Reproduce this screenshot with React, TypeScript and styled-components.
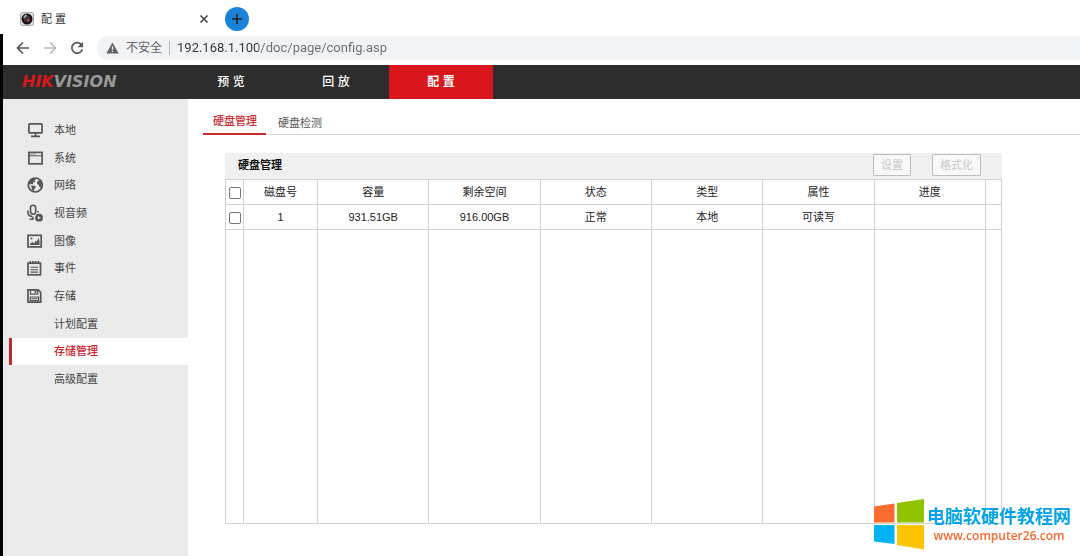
import React from "react";
import styled, { createGlobalStyle } from "styled-components";

const GlobalStyle = createGlobalStyle`
  * { box-sizing: border-box; }
  body {
    margin: 0;
    background: #fff;
    color: #222;
    font-family: "Liberation Sans", "Noto Sans CJK SC", sans-serif;
    font-size: 11px;
    line-height: 16px;
  }
  a { color: inherit; text-decoration: none; }
  button { font: inherit; padding: 0; border: 0; background: none; color: inherit; }
`;

const Page = styled.div`
  min-height: 100vh;
  display: flex;
  flex-direction: column;
`;

const TabStrip = styled.div`
  height: 34px;
  padding: 3px 20px 0;
  display: flex;
  align-items: center;
`;

const BrowserTab = styled.div`
  width: 190px;
  display: flex;
  align-items: center;
  gap: 7px;
  color: #333;
  span { flex: 1; }
`;

const IconButton = styled.button`
  display: flex;
  align-items: center;
  justify-content: center;
  flex: none;
`;

const NewTab = styled(IconButton)`
  width: 24px;
  height: 24px;
  margin-left: 15px;
  border-radius: 50%;
  background: #1a82d8;
`;

const Window = styled.div`
  flex: 1;
  display: flex;
  flex-direction: column;
  border-left: 3px solid #000;
`;

const Toolbar = styled.div`
  height: 31px;
  padding: 2px 0 5px 13px;
  display: flex;
  align-items: center;
  gap: 13px;
`;

const Address = styled.label`
  flex: 1;
  height: 24px;
  padding-left: 9px;
  display: flex;
  align-items: center;
  gap: 7px;
  border-radius: 12px 0 0 12px;
  background: #f1f3f4;
  color: #5f6368;
  font-size: 12px;
`;

const Divider = styled.i`
  width: 1px;
  height: 14px;
  background: #b4b7ba;
`;

const AddressInput = styled.input`
  flex: 1;
  height: 22px;
  padding: 0;
  border: 0;
  outline: 0;
  font: 13px/22px Roboto, "Noto Sans CJK SC", sans-serif;
  color: transparent;
  caret-color: #333;
  background: linear-gradient(to right, #303336 81px, #6a6d71 81px) text;
`;

const Header = styled.header`
  height: 34px;
  display: flex;
  background: #2d2d2d;
  color: #fff;
`;

const Logo = styled.a`
  width: 176px;
  padding-left: 19px;
  font: italic 700 16px/34px "DejaVu Sans", sans-serif;
  color: #999;
  b { color: #d9161c; }
`;

const Nav = styled.nav`
  display: flex;
  gap: 1px;
`;

const NavLink = styled.a<{ $active?: boolean }>`
  width: 104px;
  text-align: center;
  font-size: 12px;
  line-height: 34px;
  font-weight: ${(p) => (p.$active ? 700 : 500)};
  background: ${(p) => (p.$active ? "#d9161c" : "transparent")};
`;

const Body = styled.div`
  flex: 1;
  display: flex;
`;

const Sidebar = styled.aside`
  width: 185px;
  flex: none;
  padding-top: 17px;
  background: #eaeaea;
`;

const Menu = styled.ul`
  list-style: none;
  margin: 0;
  padding: 0;
  height: 277px;
  display: grid;
  grid-auto-rows: 1fr;
`;

const MenuLink = styled.a<{ $active?: boolean }>`
  height: 100%;
  margin-left: 6px;
  padding-left: 15px;
  border-left: 3px solid ${(p) => (p.$active ? "#c9252d" : "transparent")};
  background: ${(p) => (p.$active ? "#fff" : "transparent")};
  color: ${(p) => (p.$active ? "#d0222b" : "#444")};
  font-weight: ${(p) => (p.$active ? 500 : 400)};
  display: flex;
  align-items: center;
  gap: 11px;
`;

const IconSlot = styled.span`
  width: 16px;
  display: flex;
  color: #555;
`;

const Main = styled.main`
  flex: 1;
  min-width: 0;
  padding: 10px 0 32px 15px;
`;

const Tabs = styled.nav`
  height: 26px;
  display: flex;
  align-items: stretch;
  border-bottom: 1px solid #d4d4d4;
`;

const TabLink = styled.a<{ $active?: boolean }>`
  height: 26px;
  padding: ${(p) => (p.$active ? "4px 9px 0 10px" : "6px 12px 0")};
  border-bottom: 2px solid ${(p) => (p.$active ? "#cc2a33" : "transparent")};
  color: ${(p) => (p.$active ? "#cc2a33" : "#555")};
  font-weight: ${(p) => (p.$active ? 500 : 400)};
`;

const Panel = styled.section`
  margin: 18px 78px 0 22px;
`;

const PanelHead = styled.div`
  height: 26px;
  padding: 0 21px 2px 13px;
  display: flex;
  align-items: center;
  gap: 21px;
  background: #f0f0f0;
  h2 {
    flex: 1;
    margin: 0;
    font-size: 11px;
    font-weight: 700;
    color: #111;
  }
`;

const DisabledButton = styled.button`
  height: 22px;
  padding: 0 7px;
  border: 1px solid #bdbdbd;
  border-radius: 1px;
  background: #f8f8f8;
  color: #c8c8c8;
`;

const Grid = styled.table`
  width: 100%;
  table-layout: fixed;
  border-collapse: collapse;
  th, td {
    height: 25px;
    padding: 0;
    border: 1px solid #d2d2d2;
    font-weight: 400;
    text-align: center;
  }
`;

const Filler = styled.tr`
  && td { height: 294px; }
`;

const Check = styled.input`
  appearance: none;
  display: block;
  width: 12px;
  height: 12px;
  margin: 2px auto 0;
  border: 1px solid #767676;
  border-radius: 2px;
  background: #fff;
`;

const Watermark = styled.a`
  position: fixed;
  right: 9px;
  bottom: 6px;
  display: flex;
  align-items: center;
  gap: 3px;
`;

const WatermarkText = styled.span`
  display: flex;
  flex-direction: column;
  align-items: center;
  gap: 2px;
  strong { font: 700 18px/20px "Noto Sans CJK SC", sans-serif; color: #00a2ec; }
  em { font: 600 12px/18px "Open Sans", sans-serif; color: #f8672c; }
`;

const Svg = ({ children }: { children: React.ReactNode }) => (
  <svg width="16" height="16" viewBox="0 0 16 16" fill="none" stroke="currentColor" strokeWidth="1.7" aria-hidden="true">
    {children}
  </svg>
);

const icons = {
  local: (
    <Svg>
      <rect x="1.9" y="1.9" width="13.200" height="9" rx="1" />
      <path d="M8.500 11v3M4 14.300h9" />
    </Svg>
  ),
  system: (
    <Svg>
      <rect x="1.900" y="2.400" width="13.200" height="11.400" />
      <path d="M2 5.800h13" strokeWidth="1" />
      <path d="M3.500 4.200h1M5.500 4.200h1M7.500 4.200h1" strokeWidth="1" />
    </Svg>
  ),
  network: (
    <Svg>
      <circle cx="8.300" cy="8" r="7" />
      <path
        d="M1.500 7.500C2 4 4.500 1.500 8 1.300L9 2.500 7.500 3.500 8 4.800 6.200 5.500 6 7.200 4.500 7zM3.500 8.500l4.500.3.8 1.500-1.500 1.700-.3 2.300L5 12.500 4.800 10.500zM10.500 4l2.500-.8 1.800 3.300-.3 4-1.700-.3L11.700 8 10 6.800z"
        fill="currentColor"
        stroke="none"
      />
    </Svg>
  ),
  av: (
    <svg width="16" height="18" viewBox="0 0 16 18" fill="none" stroke="currentColor" strokeWidth="1.6" aria-hidden="true">
      <rect x="3.500" y="1.200" width="5.200" height="9" rx="2.600" />
      <path d="M1 6.500v2c0 2.300 1.800 3.700 4 3.900M5.700 12.500v2.800M2.500 15.300h4.200M11 7v1.600" />
      <circle cx="12" cy="13.700" r="3.900" fill="currentColor" stroke="none" />
      <path d="M10.900 11.900l2.900 1.800-2.900 1.800z" fill="#eaeaea" stroke="none" />
    </svg>
  ),
  image: (
    <Svg>
      <rect x="1" y="2.300" width="13.200" height="11.600" />
      <path d="M3.200 12V10.500l2.500-1.500 1.800 1.500 1-3 1 1.500 2.200-4L12.500 8v4z" fill="currentColor" stroke="none" />
      <circle cx="4.500" cy="5.500" r="1" fill="currentColor" stroke="none" />
    </Svg>
  ),
  event: (
    <Svg>
      <rect x="1" y="3.200" width="12.500" height="11.600" />
      <path d="M3.200 1v3M5.900 1v3M8.600 1v3M11.300 1v3" />
      <path d="M3.500 7.300H11M3.500 9.700H11M3.500 12.100H11" strokeWidth="1.100" />
    </Svg>
  ),
  storage: (
    <Svg>
      <path d="M1 1.900h10.300l2.400 2.400v9.900H1z" />
      <path d="M3.500 2v4.200h7.200V2" strokeWidth="1.200" />
      <path d="M8.500 2.500v2.500" />
      <path d="M3.300 9h8.300v3.500H3.300z" strokeWidth="1.200" />
      <path d="M4.500 10.700h6" strokeWidth="1" />
    </Svg>
  ),
};

const menu: { label: string; icon?: keyof typeof icons; active?: boolean }[] = [
  { label: "本地", icon: "local" },
  { label: "系统", icon: "system" },
  { label: "网络", icon: "network" },
  { label: "视音频", icon: "av" },
  { label: "图像", icon: "image" },
  { label: "事件", icon: "event" },
  { label: "存储", icon: "storage" },
  { label: "计划配置" },
  { label: "存储管理", active: true },
  { label: "高级配置" },
];

const columns = ["磁盘号", "容量", "剩余空间", "状态", "类型", "属性", "进度", ""];
const disk = ["1", "931.51GB", "916.00GB", "正常", "本地", "可读写", "", ""];

export default function App() {
  return (
    <Page>
      <GlobalStyle />
      <TabStrip>
        <BrowserTab>
          <svg width="14" height="14" viewBox="0 0 14 14" aria-hidden="true">
            <rect x=".5" y=".5" width="13" height="13" rx="2" fill="#ddd" stroke="#aaa" />
            <circle cx="7" cy="7" r="5.500" fill="#151515" />
            <circle cx="7" cy="7" r="3.200" fill="#4a3438" />
            <path d="M4 6a3.200 3.200 0 0 1 3-2.500" stroke="#7cc4d4" strokeWidth="1.500" fill="none" />
            <circle cx="8.500" cy="8.300" r="1.100" fill="#d2545a" />
          </svg>
          <span>配 置</span>
          <IconButton type="button" aria-label="关闭标签页">
            <svg width="12" height="12" viewBox="0 0 12 12" stroke="#444" strokeWidth="1.600" aria-hidden="true">
              <path d="M2.500 2.500l7 7M9.500 2.500l-7 7" />
            </svg>
          </IconButton>
        </BrowserTab>
        <NewTab type="button" aria-label="新建标签页">
          <svg width="12" height="12" viewBox="0 0 12 12" stroke="#222" strokeWidth="1.600" aria-hidden="true">
            <path d="M6 1v10M1 6h10" />
          </svg>
        </NewTab>
      </TabStrip>
      <Window>
        <Toolbar>
          <IconButton type="button" aria-label="后退">
            <svg width="14" height="14" viewBox="0 0 14 14" fill="none" stroke="#55585c" strokeWidth="1.700" aria-hidden="true">
              <path d="M13 7H2M7 1.500L1.500 7 7 12.500" />
            </svg>
          </IconButton>
          <IconButton type="button" aria-label="前进">
            <svg width="14" height="14" viewBox="0 0 14 14" fill="none" stroke="#b8babd" strokeWidth="1.700" aria-hidden="true">
              <path d="M1 7h11M7 1.500L12.500 7 7 12.500" />
            </svg>
          </IconButton>
          <IconButton type="button" aria-label="重新加载">
            <svg width="14" height="14" viewBox="0 0 14 14" fill="none" stroke="#55585c" strokeWidth="1.700" aria-hidden="true">
              <path d="M11.800 4.300A5.300 5.300 0 1 0 12.300 8.200" />
              <path d="M13 .800v5.400H7.600z" fill="#55585c" stroke="none" />
            </svg>
          </IconButton>
          <Address>
            <svg width="13" height="12" viewBox="0 0 13 12" aria-hidden="true">
              <path d="M6.500.5L12.700 11.500H.3z" fill="#5f6368" />
              <path d="M6.500 4.200v3.600M6.500 8.800v1.300" stroke="#f1f3f4" strokeWidth="1.300" />
            </svg>
            <span>不安全</span>
            <Divider />
            <AddressInput defaultValue="192.168.1.100/doc/page/config.asp" />
          </Address>
        </Toolbar>
        <Header>
          <Logo href="#">
            <b>HIK</b>VISION
          </Logo>
          <Nav>
            <NavLink href="#">预 览</NavLink>
            <NavLink href="#">回 放</NavLink>
            <NavLink href="#" $active>配 置</NavLink>
          </Nav>
        </Header>
        <Body>
          <Sidebar>
            <Menu>
              {menu.map((m) => (
                <li key={m.label}>
                  <MenuLink href="#" $active={m.active}>
                    <IconSlot>{m.icon && icons[m.icon]}</IconSlot>
                    {m.label}
                  </MenuLink>
                </li>
              ))}
            </Menu>
          </Sidebar>
          <Main>
            <Tabs>
              <TabLink href="#" $active>硬盘管理</TabLink>
              <TabLink href="#">硬盘检测</TabLink>
            </Tabs>
            <Panel>
              <PanelHead>
                <h2>硬盘管理</h2>
                <DisabledButton type="button" disabled>设置</DisabledButton>
                <DisabledButton type="button" disabled>格式化</DisabledButton>
              </PanelHead>
              <Grid>
                <colgroup>
                  <col style={{ width: 18 }} />
                  <col style={{ width: 74 }} />
                  <col span={6} />
                  <col style={{ width: 16 }} />
                </colgroup>
                <thead>
                  <tr>
                    <th><Check type="checkbox" aria-label="全选" /></th>
                    {columns.map((c, i) => <th key={i}>{c}</th>)}
                  </tr>
                </thead>
                <tbody>
                  <tr>
                    <td><Check type="checkbox" aria-label="选择磁盘 1" /></td>
                    {disk.map((d, i) => <td key={i}>{d}</td>)}
                  </tr>
                  <Filler>
                    <td />
                    {columns.map((_, i) => <td key={i} />)}
                  </Filler>
                </tbody>
              </Grid>
            </Panel>
          </Main>
        </Body>
      </Window>
      <Watermark href="#">
        <svg width="50" height="51" viewBox="0 0 50 51" aria-hidden="true">
          <path d="M0 7.500L20.500 4.500v19H0z" fill="#fb6a2e" />
          <path d="M23 4L50 0v23.500H23z" fill="#91c300" />
          <path d="M0 26h20.500v19L0 42.500z" fill="#00b3f4" />
          <path d="M23 26h27v24.500L23 46z" fill="#ffc400" />
        </svg>
        <WatermarkText>
          <strong>电脑软硬件教程网</strong>
          <em>www.computer26.com</em>
        </WatermarkText>
      </Watermark>
    </Page>
  );
}
